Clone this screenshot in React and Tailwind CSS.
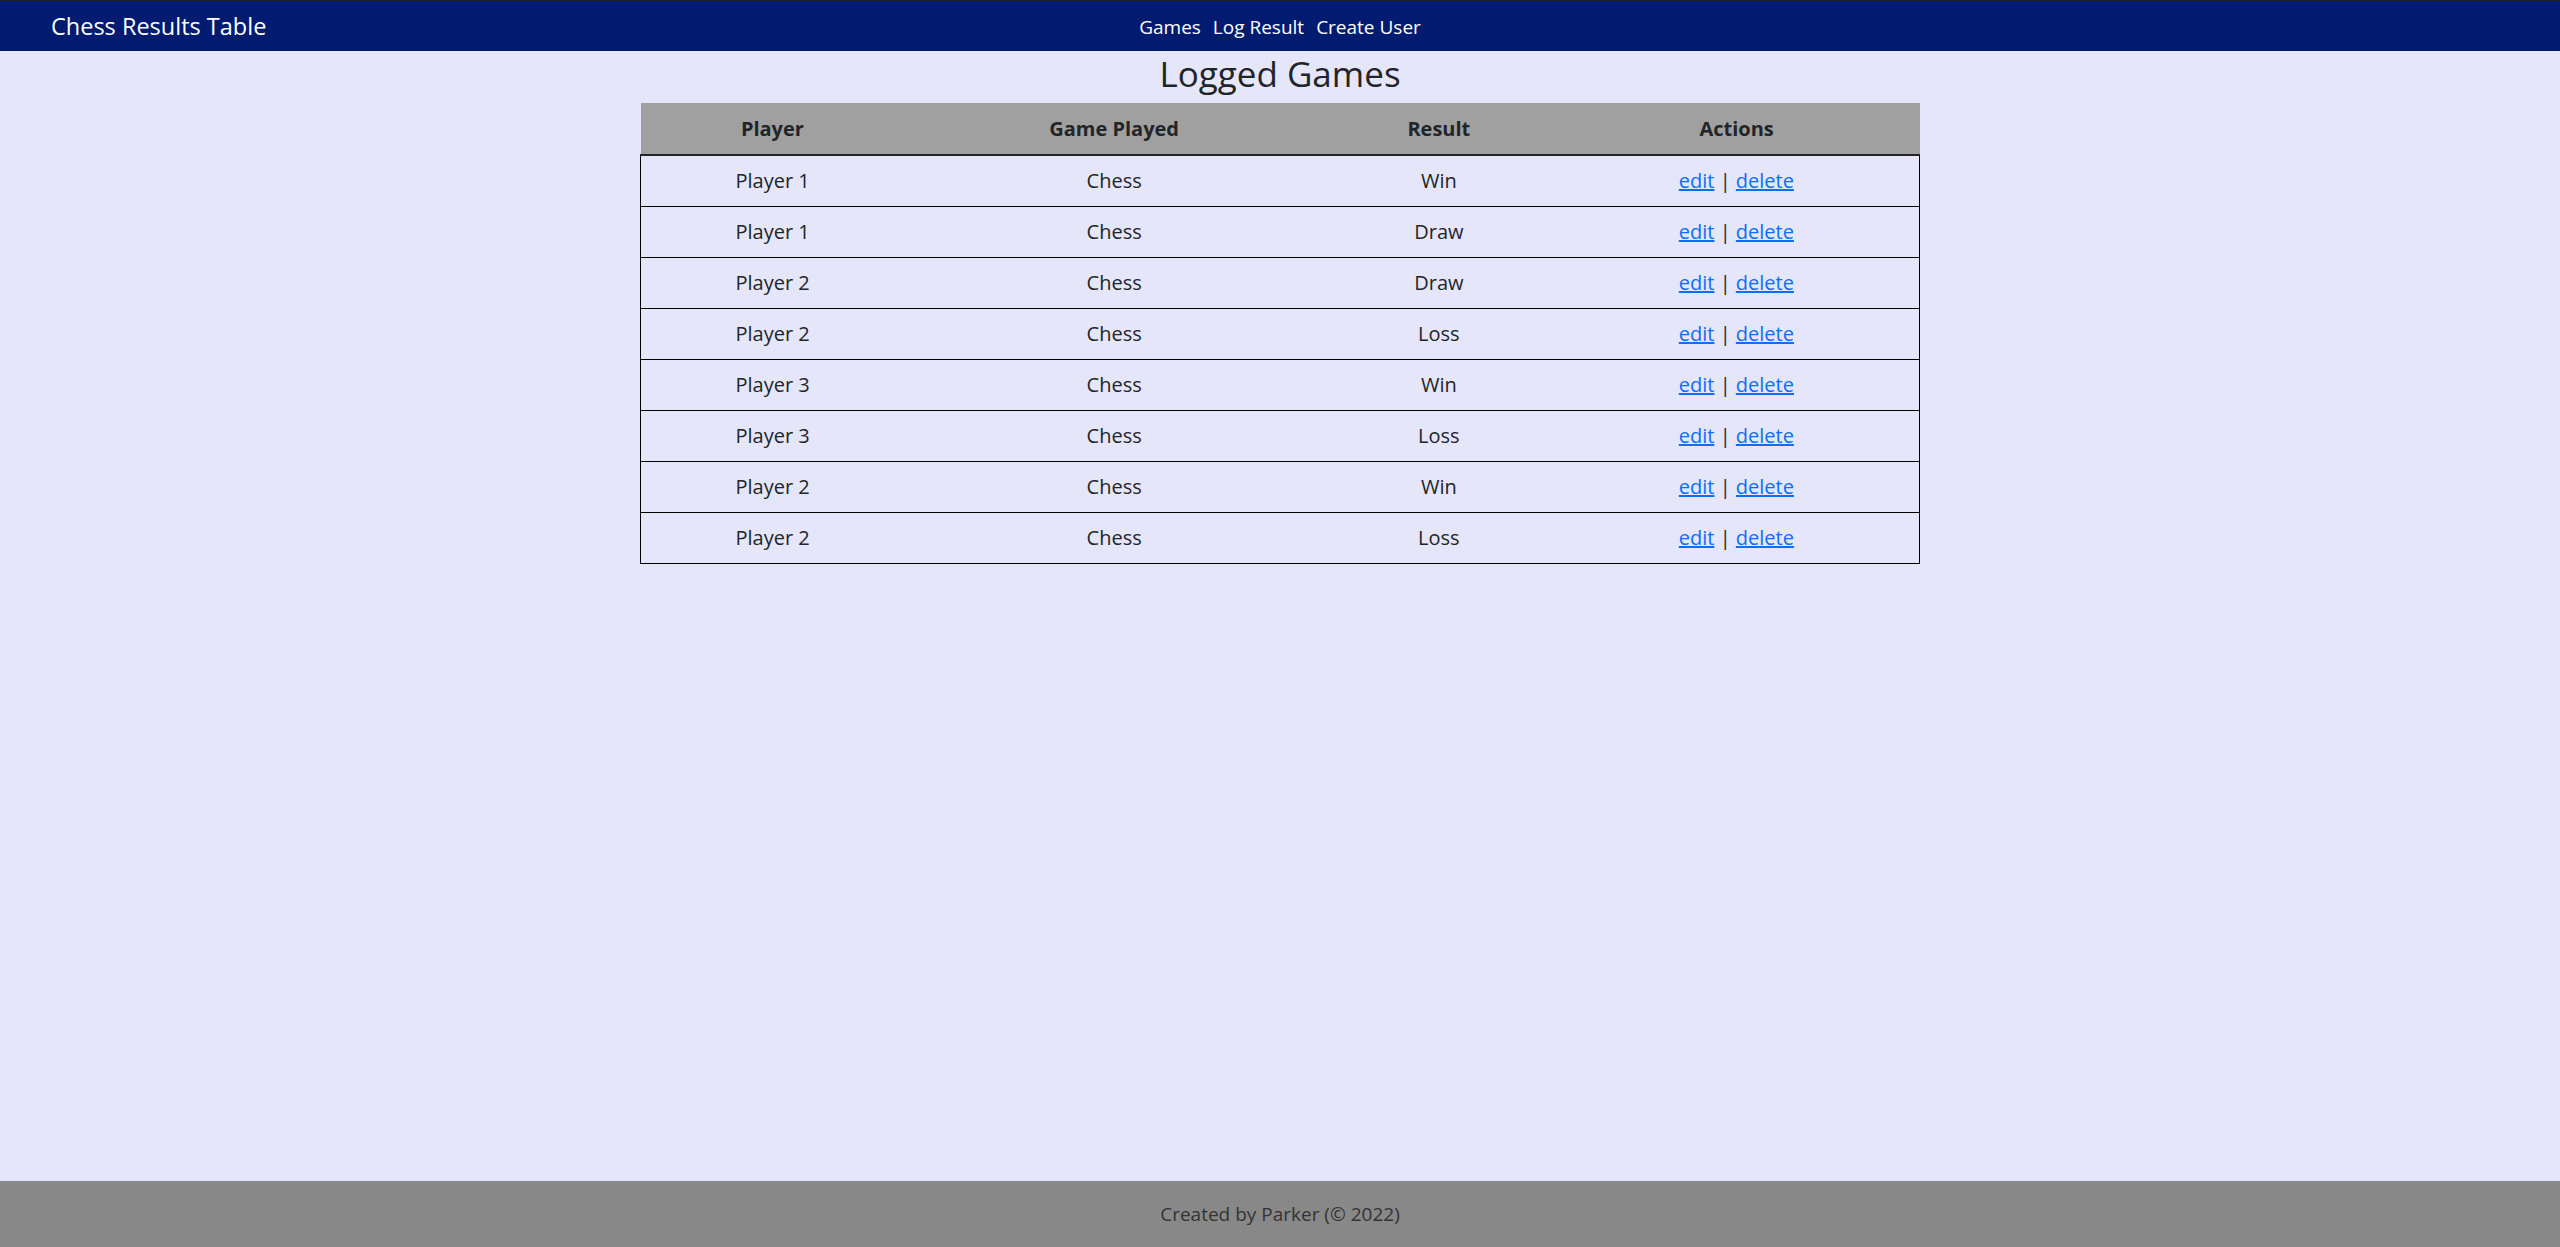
import React from 'react';

const games = [
    { player: 'Player 1', game: 'Chess', result: 'Win' },
    { player: 'Player 1', game: 'Chess', result: 'Draw' },
    { player: 'Player 2', game: 'Chess', result: 'Draw' },
    { player: 'Player 2', game: 'Chess', result: 'Loss' },
    { player: 'Player 3', game: 'Chess', result: 'Win' },
    { player: 'Player 3', game: 'Chess', result: 'Loss' },
    { player: 'Player 2', game: 'Chess', result: 'Win' },
    { player: 'Player 2', game: 'Chess', result: 'Loss' },
];

const Navbar = () => {
    return (
        <nav className="h-[51px] border-t border-[#222222] bg-[#001b6f] grid grid-cols-[1fr_auto_1fr] items-center text-white">
            <a href="#" className="pl-[51px] text-[23.5px] leading-none pt-[2px]">Chess Results Table</a>
            <div className="flex items-center gap-[12px] text-[19px] leading-none pt-[2px]">
                <a href="#">Games</a>
                <a href="#">Log Result</a>
                <a href="#">Create User</a>
            </div>
            <div />
        </nav>
    );
};

const GamesTable = () => {
    return (
        <table className="w-[1280px] mx-auto border-collapse text-[20px] leading-[30px] text-[#212529]">
            <thead>
                <tr className="bg-[#a0a0a0] border-b-2 border-[#262626]">
                    <th className="w-[264px] h-[52px] font-bold">Player</th>
                    <th className="w-[420px] font-bold">Game Played</th>
                    <th className="w-[230px] font-bold">Result</th>
                    <th className="w-[366px] font-bold">Actions</th>
                </tr>
            </thead>
            <tbody>
                {games.map((g, i) => (
                    <tr key={i} className="border border-black text-center">
                        <td className="h-[51px]">{g.player}</td>
                        <td>{g.game}</td>
                        <td>{g.result}</td>
                        <td>
                            <a href="#" className="text-[#0d6efd] underline">edit</a>
                            {' | '}
                            <a href="#" className="text-[#0d6efd] underline">delete</a>
                        </td>
                    </tr>
                ))}
            </tbody>
        </table>
    );
};

export default function App() {
    return (
        <div className="min-h-screen flex flex-col bg-[#e6e6fa] font-['Open_Sans',sans-serif]">
            <Navbar />
            <main className="flex-1">
                <h3 className="text-center text-[35px] leading-[42px] font-medium text-[#212529] mt-[2px] mb-[8px]">Logged Games</h3>
                <GamesTable />
            </main>
            <footer className="h-[66px] bg-[#888888] flex items-center justify-center text-[19px] text-[#333333]">
                Created by Parker (© 2022)
            </footer>
        </div>
    );
}
